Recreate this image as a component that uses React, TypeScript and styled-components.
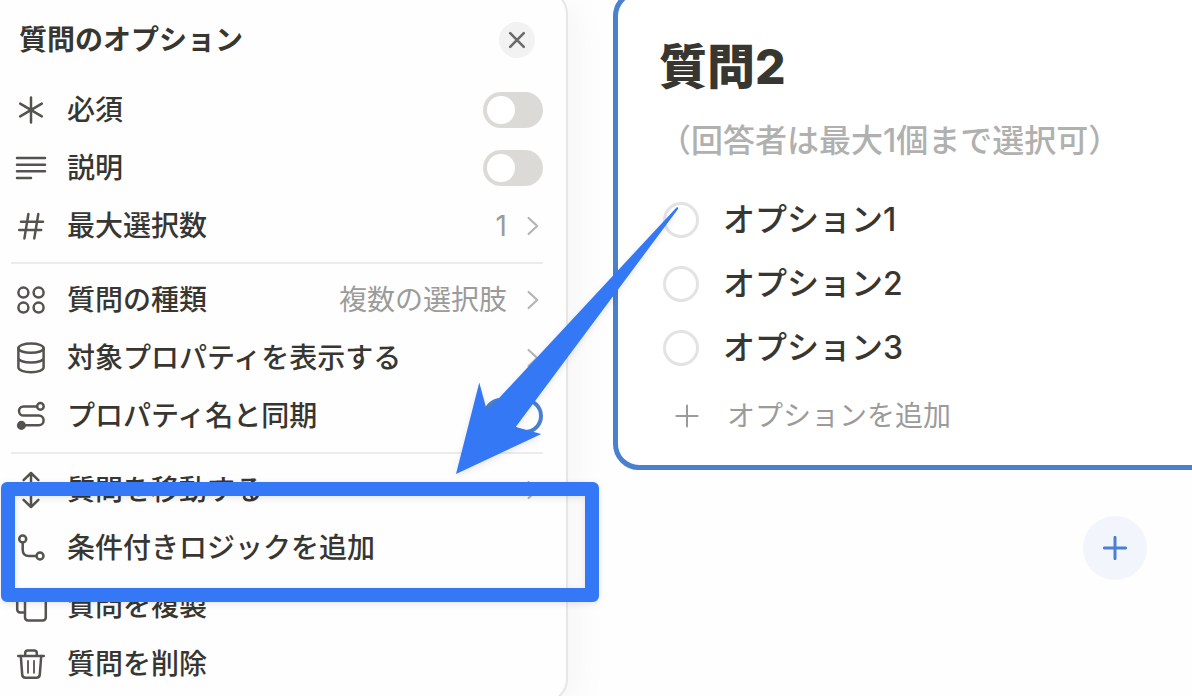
import React from "react";
import styled, { createGlobalStyle } from "styled-components";

const ink = "#383631";
const muted = "#9b9b9a";
const accent = "#4a80d0";
const marker = "#3478f6";

const GlobalStyle = createGlobalStyle`
  * { box-sizing: border-box; }
  body {
    margin: 0;
    background: #fefefe;
    color: ${ink};
    font-family: Inter, "Noto Sans CJK JP", sans-serif;
    font-size: 28px;
    font-weight: 500;
  }
  button { font: inherit; color: inherit; background: none; border: 0; padding: 0; cursor: pointer; }
  h1, h2, p { margin: 0; }
`;

const Page = styled.div`
  position: relative;
  display: flex;
  align-items: flex-start;
  gap: 45px;
  height: 100vh;
  overflow: hidden;
`;

const Panel = styled.aside`
  flex: 0 0 568px;
  margin-top: -10px;
  padding: 28px 23px 8px 11px;
  background: #fefefe;
  border: 2px solid #e6e6e6;
  border-left: 0;
  border-radius: 0 24px 24px 0;
  box-shadow: 8px 8px 36px rgba(0, 0, 0, 0.04);
`;

const PanelHeader = styled.header`
  display: flex;
  align-items: center;
  justify-content: space-between;
  height: 40px;
  margin-bottom: 21px;
  padding: 0 8px;
`;

const PanelTitle = styled.h2`
  font-size: 28px;
  line-height: 40px;
  font-weight: 700;
`;

const CloseButton = styled.button`
  display: grid;
  place-items: center;
  width: 36px;
  height: 36px;
  border-radius: 50%;
  background: #f2f2f2;
  color: #6a6a68;
`;

const Group = styled.div`
  display: flex;
  flex-direction: column;

  & + & {
    margin-top: 7px;
    padding-top: 7px;
    border-top: 2px solid #ececeb;
  }
`;

const rowLayout = `
  display: flex;
  align-items: center;
  width: 100%;
  height: 58px;
  padding-left: 4px;
  line-height: 40px;
  text-align: left;
  white-space: nowrap;
  cursor: pointer;
`;

const ToggleRow = styled.label`${rowLayout}`;
const ActionRow = styled.button`${rowLayout}`;

const RowIcon = styled.svg`
  flex: none;
  width: 32px;
  height: 32px;
  margin-right: 20px;
  overflow: visible;
  fill: none;
  stroke: #55534f;
  stroke-width: 2.5;
  stroke-linecap: round;
  stroke-linejoin: round;
`;

const RowLabel = styled.span`
  flex: 1;
`;

const RowValue = styled.span`
  color: ${muted};
  font-weight: 400;
`;

const Chevron = styled.svg`
  flex: none;
  width: 12px;
  height: 20px;
  margin: 0 4px 0 20px;
  fill: none;
  stroke: #b4b4b2;
  stroke-width: 2.2;
  stroke-linecap: round;
  stroke-linejoin: round;
`;

const Switch = styled.input`
  appearance: none;
  display: flex;
  flex: none;
  width: 60px;
  height: 36px;
  margin: 0;
  padding: 4px;
  border-radius: 18px;
  background: #dbdad7;
  cursor: pointer;

  &::before {
    content: "";
    width: 28px;
    height: 28px;
    border-radius: 50%;
    background: #fff;
  }
  &:checked { background: ${accent}; justify-content: flex-end; }
`;

const Main = styled.main`
  flex: 1;
  min-width: 0;
  display: flex;
  flex-direction: column;
`;

const QuestionCard = styled.section`
  margin: -10px -40px 0 0;
  padding: 42px 41px 21px;
  background: #fff;
  border: 5px solid ${accent};
  border-radius: 26px;
`;

const QuestionTitle = styled.h1`
  font-size: 48px;
  line-height: 60px;
  font-weight: 800;
`;

const Hint = styled.p`
  margin: 20px 0 23px;
  font-size: 32px;
  line-height: 48px;
  color: #b0b0af;
  white-space: nowrap;
`;

const Option = styled.label`
  display: flex;
  align-items: center;
  gap: 24px;
  height: 64px;
  padding-left: 4px;
  font-size: 32px;
  line-height: 48px;
  cursor: pointer;
`;

const Radio = styled.input`
  appearance: none;
  width: 36px;
  height: 36px;
  margin: 0;
  border: 3px solid #e3e3e2;
  border-radius: 50%;
  &:checked { border-color: ${accent}; }
`;

const AddOption = styled.button`
  display: flex;
  align-items: center;
  gap: 28px;
  height: 56px;
  margin-top: 8px;
  padding-left: 16px;
  line-height: 40px;
  font-weight: 400;
  color: ${muted};
`;

const AddQuestion = styled.button`
  align-self: flex-end;
  display: grid;
  place-items: center;
  width: 64px;
  height: 64px;
  margin: 46px 45px 0 0;
  border-radius: 50%;
  background: #f2f5fc;
  color: ${accent};
`;

const Annotation = styled.svg`
  position: absolute;
  top: 0;
  left: 0;
  width: 600px;
  height: 610px;
  overflow: visible;
  pointer-events: none;
  filter: drop-shadow(0 2px 3px rgba(0, 0, 0, 0.1));
`;

const icons = {
  required: <path d="M16 3.6v24.8M5.2 9.6l21.6 12.8M26.8 9.6L5.2 22.4" />,
  description: <path d="M2 6h28M2 12.7h28M2 19.3h28M2 26h14" />,
  hash: <path d="M13.4 4L9.4 28.4M23.3 4l-4 24.4M6 11.7h22M4.2 20h22" />,
  kind: (
    <>
      <circle cx="8.4" cy="8.6" r="5" />
      <circle cx="23.6" cy="8.6" r="5" />
      <circle cx="8.4" cy="23.6" r="5" />
      <circle cx="23.6" cy="23.6" r="5" />
    </>
  ),
  database: (
    <>
      <ellipse cx="16" cy="6.2" rx="12.6" ry="4.6" />
      <path d="M3.4 6.2v19.4c0 2.6 5.6 4.6 12.6 4.6s12.6-2 12.6-4.6V6.2M3.4 16c0 2.6 5.6 4.6 12.6 4.6s12.6-2 12.6-4.6" />
    </>
  ),
  sync: (
    <>
      <circle cx="25.4" cy="6.4" r="3.3" />
      <path d="M22 6.4H8.6a4.6 4.6 0 0 0 0 9.2h15.2a4.8 4.8 0 0 1 0 9.6H8" />
      <circle cx="6.4" cy="25.4" r="3.3" fill="#55534f" />
    </>
  ),
  move: <path d="M16-1v34M8.6 6.2L16-1l7.4 7.2M8.6 25.8L16 33l7.4-7.2" />,
  logic: (
    <>
      <circle cx="7.7" cy="7" r="3.5" />
      <circle cx="25" cy="24" r="3.5" />
      <path d="M7.7 10.6v7.2c0 4 2.2 6.2 6.2 6.2h7.5" />
    </>
  ),
  copy: (
    <>
      <rect x="10" y="9" width="20.8" height="21.6" rx="3" />
      <path d="M9.6 22.4H5.2a3 3 0 0 1-3-3V4.6a3 3 0 0 1 3-3h13a3 3 0 0 1 3 3V8" />
    </>
  ),
  trash: (
    <>
      <path d="M3.2 8h25.6M10.2 8V5.2c0-1.6.8-2.6 2.5-2.6h6.6c1.7 0 2.5 1 2.5 2.6V8" />
      <path d="M5.8 8l1.4 18.6c.2 2.2 1.4 3.2 3.4 3.2h10.8c2 0 3.2-1 3.4-3.2L26.2 8" />
      <path d="M13 12.8v12M19 12.8v12" strokeWidth="1.8" />
    </>
  ),
};

type IconName = keyof typeof icons;

const Icon = ({ name }: { name: IconName }) => (
  <RowIcon viewBox="0 0 32 32" aria-hidden="true">{icons[name]}</RowIcon>
);

const Plus = ({ weight }: { weight: number }) => (
  <svg width="24" height="24" viewBox="0 0 24 24" fill="none" stroke="currentColor" strokeWidth={weight} strokeLinecap="round" aria-hidden="true">
    <path d="M12 1.4v21.2M1.4 12h21.2" />
  </svg>
);

const Toggle = ({ icon, label, on }: { icon: IconName; label: string; on?: boolean }) => (
  <ToggleRow>
    <Icon name={icon} />
    <RowLabel>{label}</RowLabel>
    <Switch type="checkbox" role="switch" defaultChecked={on} />
  </ToggleRow>
);

const Action = ({ icon, label, value, more }: { icon: IconName; label: string; value?: string; more?: boolean }) => (
  <ActionRow type="button">
    <Icon name={icon} />
    <RowLabel>{label}</RowLabel>
    {value && <RowValue>{value}</RowValue>}
    {more && (
      <Chevron viewBox="0 0 12 20" aria-hidden="true">
        <path d="M1.6 2l8.6 8-8.6 8" />
      </Chevron>
    )}
  </ActionRow>
);

export default function App() {
  return (
    <>
      <GlobalStyle />
      <Page>
        <Panel>
          <PanelHeader>
            <PanelTitle>質問のオプション</PanelTitle>
            <CloseButton type="button" aria-label="閉じる">
              <svg width="18" height="18" viewBox="0 0 18 18" fill="none" stroke="currentColor" strokeWidth="2.6" strokeLinecap="round">
                <path d="M2.2 2.2l13.6 13.6M15.8 2.2L2.2 15.8" />
              </svg>
            </CloseButton>
          </PanelHeader>
          <Group>
            <Toggle icon="required" label="必須" />
            <Toggle icon="description" label="説明" />
            <Action icon="hash" label="最大選択数" value="1" more />
          </Group>
          <Group>
            <Action icon="kind" label="質問の種類" value="複数の選択肢" more />
            <Action icon="database" label="対象プロパティを表示する" more />
            <Toggle icon="sync" label="プロパティ名と同期" on />
          </Group>
          <Group>
            <Action icon="move" label="質問を移動する" more />
            <Action icon="logic" label="条件付きロジックを追加" />
            <Action icon="copy" label="質問を複製" />
            <Action icon="trash" label="質問を削除" />
          </Group>
        </Panel>
        <Main>
          <QuestionCard>
            <QuestionTitle>質問2</QuestionTitle>
            <Hint>（回答者は最大1個まで選択可）</Hint>
            {["オプション1", "オプション2", "オプション3"].map((text) => (
              <Option key={text}>
                <Radio type="radio" name="answer" />
                {text}
              </Option>
            ))}
            <AddOption type="button">
              <Plus weight={2} />
              オプションを追加
            </AddOption>
          </QuestionCard>
          <AddQuestion type="button" aria-label="質問を追加">
            <Plus weight={3} />
          </AddQuestion>
        </Main>
        <Annotation viewBox="0 0 600 610" aria-hidden="true">
          <path
            fill={marker}
            fillRule="evenodd"
            d="M7 482H593a6 6 0 0 1 6 6V596a6 6 0 0 1-6 6H7a6 6 0 0 1-6-6V488a6 6 0 0 1 6-6ZM15 496V588H585V496Z"
          />
          <path fill={marker} d="M456 474L479.3 382.5L487 411L676.5 207.5Q678.5 206.5 678 209L515.7 427L541.3 434Z" />
        </Annotation>
      </Page>
    </>
  );
}
